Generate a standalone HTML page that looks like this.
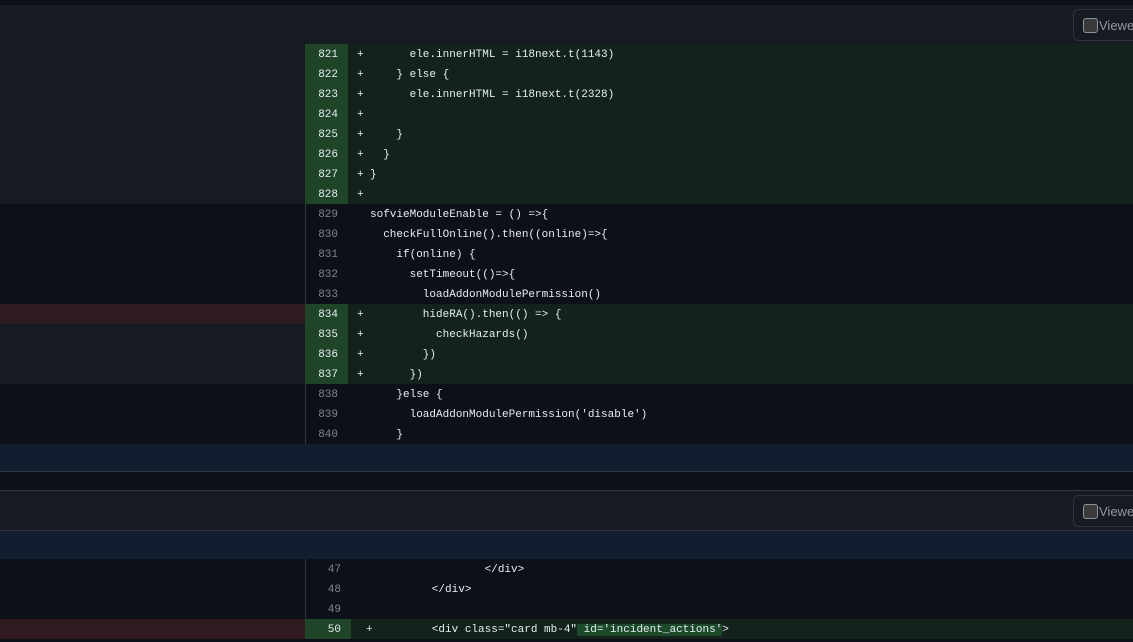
<!DOCTYPE html>
<html><head><meta charset="utf-8"><style>
*{margin:0;padding:0;box-sizing:border-box}
body{width:1133px;height:642px;background:#0d1117;overflow:hidden;position:relative;font-family:"Liberation Mono",monospace;font-size:11px;color:#e6edf3}
.a{position:absolute}
.row{position:absolute;left:0;width:1133px;height:20px;line-height:22px}
.l{position:absolute;left:0;width:305px;height:20px}
.n{position:absolute;left:305px;height:20px;text-align:right;padding-right:10px;color:#7d8590;border-left:1px solid #30363d}
.p{position:absolute;height:20px;color:#e6edf3}
.c{position:absolute;right:0;height:20px;white-space:pre}
.add .n{background:#1f4427;color:#e6edf3;border-left:none}
.add .c,.add .p{background:#13231b}
.hl{background:#1d4a2b;border-radius:2px}
.hdr{position:absolute;left:0;width:1133px;height:41px;background:#161b22;border-bottom:1px solid #30363d}
.vb{position:absolute;left:1073px;width:80px;height:32px;border:1px solid #30363d;border-radius:6px;background:#161b22;font-family:"Liberation Sans",sans-serif;font-size:13px;color:#9198a1;line-height:31px;padding-left:25px}
.vb:before{content:"";position:absolute;left:9px;top:8px;width:13px;height:13px;border:1px solid #8b949e;border-radius:3px;background:#3a3a3a}
</style></head><body>
<div class="hdr" style="top:5px"><div class="vb" style="top:4px">Viewed</div></div>
<div class="a" style="top:444px;left:0;width:1133px;height:28px;background:#121d2f;border-bottom:1px solid #30363d"></div>
<div class="hdr" style="top:490px;border-top:1px solid #30363d"><div class="vb" style="top:4px">Viewed</div></div>
<div class="a" style="top:531px;left:0;width:1133px;height:28px;background:#121d2f"></div>
<div id="d1"></div><div id="d2"></div>
<script>
function esc(s){return s.replace(/&/g,'&amp;').replace(/</g,'&lt;');}
function rows(start,lines,top,nw,pl,cl,target){
 let h='';
 lines.forEach((x,i)=>{
  const [t,code,left,hl]=x;
  const y=top+i*20;
  const lb=left==='r'?'#2f1a1f':(t?'#161b22':'#0d1117');
  let c=esc(code);
  if(hl)c+='<span class="hl">'+esc(hl)+'</span>&gt;';
  h+=`<div class="row ${t?'add':''}" style="top:${y}px"><div class="l" style="background:${lb}"></div><div class="n" style="width:${nw}px">${start+i}</div>${t?`<div class="p" style="left:${305+nw}px;width:${cl-305-nw}px;padding-left:${pl}px">+</div>`:''}<div class="c" style="left:${cl}px">${c}</div></div>`;
 });
 document.getElementById(target).innerHTML=h;
}
rows(821,[
[1,'      ele.innerHTML = i18next.t(1143)'],
[1,'    } else {'],
[1,'      ele.innerHTML = i18next.t(2328)'],
[1,''],
[1,'    }'],
[1,'  }'],
[1,'}'],
[1,''],
[0,'sofvieModuleEnable = () =>{'],
[0,'  checkFullOnline().then((online)=>{'],
[0,'    if(online) {'],
[0,'      setTimeout(()=>{'],
[0,'        loadAddonModulePermission()'],
[1,'        hideRA().then(() => {','r'],
[1,'          checkHazards()'],
[1,'        })'],
[1,'      })'],
[0,'    }else {'],
[0,'      loadAddonModulePermission(\'disable\')'],
[0,'    }']
],44,43,9,370,'d1');
rows(47,[
[0,'                </div>'],
[0,'        </div>'],
[0,''],
[1,'        <div class="card mb-4"','r'," id='incident_actions'"]
],559,46,15,379,'d2');
</script>
</body></html>
